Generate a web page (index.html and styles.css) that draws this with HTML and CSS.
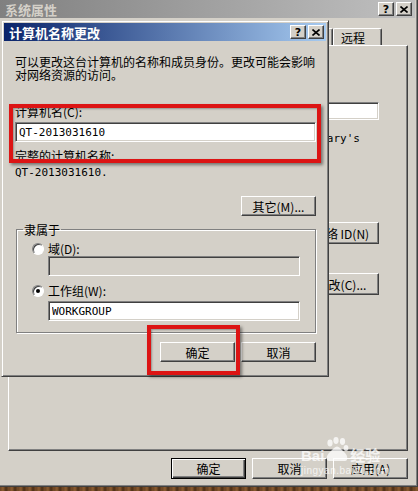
FILE: index.html
```html
<!DOCTYPE html>
<html lang="zh-CN">
<head>
    <meta charset="UTF-8" />
    <title>计算机名称更改</title>
    <link rel="stylesheet" href="styles.css">
</head>
<body>
    <!-- 背后的 系统属性 窗口 -->
    <div class="win">
        <div class="caption inactive">
            <span class="cap-title">系统属性</span>
            <span class="cap-btns">
                <span class="cbtn">?</span>
                <span class="cbtn"><svg width="8" height="7" viewBox="0 0 8 7"><path d="M0.5 0.5l7 6M7.5 0.5l-7 6" stroke="#000" stroke-width="1.6"/></svg></span>
            </span>
        </div>
        <div class="tabs">
            <span class="tab">常规</span>
            <span class="tab">计算机名</span>
            <span class="tab">硬件</span>
            <span class="tab">高级</span>
            <span class="tab">系统还原</span>
            <span class="tab">自动更新</span>
            <span class="tab last">远程</span>
        </div>
        <div class="panel">
            <div class="intro">Windows 使用以下信息在网络中标识这台计算机。</div>
            <div class="desc-row">
                <span class="desc-label">计算机描述(D):</span>
                <input class="field short" type="text" value="">
            </div>
            <div class="example-line">例如: "Kitchen Computer" 或 "<span class="latin">Mary's</span></div>
            <div class="example-cont">Computer"。</div>
            <div class="info-row">完整的计算机名称:　QT-2013031610.</div>
            <div class="info-row">工作组:　WORKGROUP</div>
            <div class="act-row net">
                <span class="act-text">要使用向导将计算机加入域并创建本地用户帐户，请单击"网络 ID"。</span>
                <button class="btn">网络 ID(N)</button>
            </div>
            <div class="act-row chg">
                <span class="act-text">要重新命名此计算机或加入域，单击"更改"。</span>
                <button class="btn">更改(C)...</button>
            </div>
        </div>
        <div class="actions">
            <button class="btn default">确定</button>
            <button class="btn">取消</button>
            <button class="btn">应用(A)</button>
        </div>
    </div>

    <!-- 前面的 计算机名称更改 对话框 -->
    <div class="dlg">
        <div class="caption active">
            <span class="cap-title">计算机名称更改</span>
            <span class="cap-btns">
                <span class="cbtn">?</span>
                <span class="cbtn"><svg width="8" height="7" viewBox="0 0 8 7"><path d="M0.5 0.5l7 6M7.5 0.5l-7 6" stroke="#000" stroke-width="1.6"/></svg></span>
            </span>
        </div>
        <div class="dlg-body">
            <p class="desc">可以更改这台计算机的名称和成员身份。更改可能会影响对网络资源的访问。</p>
            <p class="label first">计算机名(C):</p>
            <input class="field" type="text" value="QT-2013031610">
            <p class="label">完整的计算机名称:</p>
            <p class="value">QT-2013031610.</p>
            <div class="more-row">
                <button class="btn">其它(M)...</button>
            </div>
            <fieldset class="group">
                <legend>隶属于</legend>
                <div class="radio-row"><span class="radio"></span><span>域(D):</span></div>
                <input class="field indent" type="text" value="" disabled>
                <div class="radio-row second"><span class="radio on"></span><span>工作组(W):</span></div>
                <input class="field indent" type="text" value="WORKGROUP">
            </fieldset>
            <div class="dlg-actions">
                <button class="btn">确定</button>
                <button class="btn">取消</button>
            </div>
        </div>
    </div>

    <!-- 红框标注 -->
    <div class="mark mark-name"></div>
    <div class="mark mark-ok"></div>

    <!-- 水印 -->
    <div class="watermark">
        <div class="wm-top">
            <span>Bai</span>
            <svg width="24" height="26" viewBox="0 0 24 26">
                <ellipse cx="5" cy="6" rx="2.6" ry="3.4"/>
                <ellipse cx="11" cy="3.5" rx="2.6" ry="3.4"/>
                <ellipse cx="17.5" cy="4.5" rx="2.6" ry="3.4"/>
                <ellipse cx="21" cy="11" rx="2.4" ry="3"/>
                <path d="M4 24c-3 0-3-5 0-8l5-5c2-2 4-2 6 0l5 5c3 3 3 8 0 8z"/>
            </svg>
            <span>经验</span>
        </div>
        <div class="wm-url">jingyan.baidu.com</div>
    </div>
</body>
</html>
```

FILE: styles.css
```css
* {
    box-sizing: border-box;
}
html, body {
    margin: 0;
    padding: 0;
}
body {
    width: 418px;
    height: 491px;
    overflow: hidden;
    position: relative;
    background: repeating-linear-gradient(90deg, #6a4424 0, #8c5c30 3px, #4a2e16 6px, #7a4e28 9px);
    font-family: "Noto Sans CJK SC", sans-serif;
    font-size: 12px;
    line-height: 13px;
    color: #000;
}
p {
    margin: 0;
}

/* 窗口外框 */
.win, .dlg {
    position: absolute;
    background: #d4d0c8;
    border: 1px solid;
    border-color: #d4d0c8 #404040 #404040 #d4d0c8;
    box-shadow: inset 1px 1px #fff, inset -1px -1px #808080;
    padding: 2px;
}
.win {
    left: -4px;
    top: -3px;
    width: 422px;
    height: 490px;
    display: flex;
    flex-direction: column;
}
.dlg {
    left: 1px;
    top: 20px;
    width: 328px;
    height: 357px;
}

/* 标题栏 */
.caption {
    height: 18px;
    display: flex;
    align-items: center;
    justify-content: space-between;
    padding: 0 2px 0 5px;
}
.caption.inactive {
    background: linear-gradient(to right, #808080, #c0c0c0);
    color: #d4d0c8;
    padding-left: 6px;
    padding-right: 3px;
}
.caption.active {
    background: linear-gradient(to right, #0a246a, #a6caf0);
    color: #fff;
}
.cap-title {
    font-weight: bold;
    font-size: 13px;
}
.cap-btns {
    display: flex;
    gap: 2px;
}
.cbtn {
    width: 16px;
    height: 14px;
    display: flex;
    align-items: center;
    justify-content: center;
    background: #d4d0c8;
    border: 1px solid;
    border-color: #fff #404040 #404040 #fff;
    box-shadow: inset -1px -1px #808080;
    font: bold 11px/1 "DejaVu Sans", sans-serif;
    color: #000;
}

/* 选项卡 */
.tabs {
    display: flex;
    justify-content: flex-end;
    height: 17px;
    margin-top: 10px;
    padding-right: 33px;
}
.tab {
    height: 17px;
    padding: 2px 7px 0;
    border: 1px solid;
    border-bottom: none;
    border-color: #fff #404040 #404040 #fff;
    border-radius: 2px 2px 0 0;
    box-shadow: inset -1px 0 #808080;
    white-space: nowrap;
}
.tab.last {
    width: 49px;
}
.panel {
    height: 406px;
    margin: 0 7px 0 9px;
    padding: 0 28px 0 12px;
    border: 1px solid;
    border-color: #fff #404040 #404040 #fff;
    box-shadow: inset -1px -1px #808080;
}
.intro {
    height: 46px;
    padding: 12px 0 0 40px;
}
.desc-row {
    display: flex;
    align-items: center;
    gap: 10px;
    margin-top: 10px;
}
.desc-label {
    flex: none;
}
.field.short {
    flex: 1;
    height: 18px;
    margin: 0;
}
.example-line {
    margin-top: 10px;
    margin-right: 19px;
    text-align: right;
    white-space: nowrap;
}
.latin {
    font: 11px/13px "DejaVu Sans Mono", monospace;
}
.example-cont {
    padding-left: 96px;
}
.info-row {
    margin-top: 6px;
}
.act-row {
    display: flex;
    align-items: flex-start;
    gap: 10px;
}
.act-row.net {
    margin-top: 26px;
}
.act-row.chg {
    margin-top: 25px;
}
.act-text {
    flex: 1;
}
.act-row .btn {
    height: 22px;
    flex: none;
}
.actions {
    display: flex;
    justify-content: flex-end;
    gap: 6px;
    margin-top: 7px;
    padding-right: 7px;
}
.actions .btn {
    height: 21px;
}

/* 按钮与输入框 */
.btn {
    width: 75px;
    height: 20px;
    padding: 0;
    background: #d4d0c8;
    border: 1px solid;
    border-color: #fff #404040 #404040 #fff;
    box-shadow: inset -1px -1px #808080;
    font: 12px/13px "Noto Sans CJK SC", sans-serif;
    color: #000;
    white-space: nowrap;
}
.btn.default {
    border-color: #000;
    box-shadow: inset 1px 1px #fff, inset -1px -1px #404040, inset -2px -2px #808080;
}
.field {
    display: block;
    width: 100%;
    height: 20px;
    margin: 4px 0 0;
    padding: 0 3px;
    background: #fff;
    border: 1px solid;
    border-color: #808080 #fff #fff #808080;
    box-shadow: inset 1px 1px #404040, inset -1px -1px #d4d0c8;
    font: 11px "DejaVu Sans Mono", monospace;
    color: #000;
    outline: none;
}
.field:disabled {
    background: #d4d0c8;
}

/* 对话框内容 */
.dlg-body {
    padding: 14px 10px 0 11px;
}
.label {
    margin-top: 7px;
}
.label.first {
    margin-top: 24px;
}
.value {
    margin-top: 4px;
    font: 11px/13px "DejaVu Sans Mono", monospace;
}
.more-row {
    display: flex;
    justify-content: flex-end;
    margin-top: 17px;
}
.group {
    margin: 7px 0 0 1px;
    padding: 6px 15px 11px 6px;
    min-width: 0;
    border: 1px solid #808080;
    box-shadow: 1px 1px #fff, inset 1px 1px #fff;
}
.group legend {
    padding: 0 1px;
    line-height: 13px;
}
.radio-row {
    display: flex;
    align-items: center;
    gap: 4px;
    height: 13px;
    padding-left: 9px;
}
.radio-row.second {
    margin-top: 8px;
}
.field.indent {
    margin-left: 25px;
    width: 252px;
}
.radio-row + .field.indent {
    margin-top: 1px;
}
.radio-row.second + .field.indent {
    margin-top: 4px;
}
.radio {
    width: 12px;
    height: 12px;
    flex: none;
    display: inline-flex;
    align-items: center;
    justify-content: center;
    border-radius: 50%;
    background: #fff;
    border: 1px solid;
    border-color: #808080 #fff #fff #808080;
    box-shadow: inset 1px 1px #404040;
}
.radio.on::after {
    content: "";
    width: 4px;
    height: 4px;
    border-radius: 50%;
    background: #000;
}
.dlg-actions {
    display: flex;
    justify-content: flex-end;
    gap: 6px;
    margin-top: 9px;
}

/* 红框标注 */
.mark {
    position: absolute;
    border: 4px solid #dc1414;
    box-shadow: 2px 2px 3px rgba(0, 0, 0, 0.45), inset 1px 1px 2px rgba(0, 0, 0, 0.3);
}
.mark-name {
    left: 9px;
    top: 104px;
    width: 312px;
    height: 59px;
}
.mark-ok {
    left: 147px;
    top: 325px;
    width: 93px;
    height: 50px;
}

/* 水印 */
.watermark {
    position: absolute;
    left: 301px;
    top: 437px;
    color: rgba(255, 255, 255, 0.75);
    fill: rgba(255, 255, 255, 0.75);
}
.wm-top {
    display: flex;
    align-items: flex-end;
    gap: 1px;
    font: bold 15px/15px "Liberation Sans", "Noto Sans CJK SC", sans-serif;
}
.wm-url {
    font: 10px/11px "Liberation Sans", sans-serif;
    margin-top: 2px;
    letter-spacing: 0.5px;
}
```
